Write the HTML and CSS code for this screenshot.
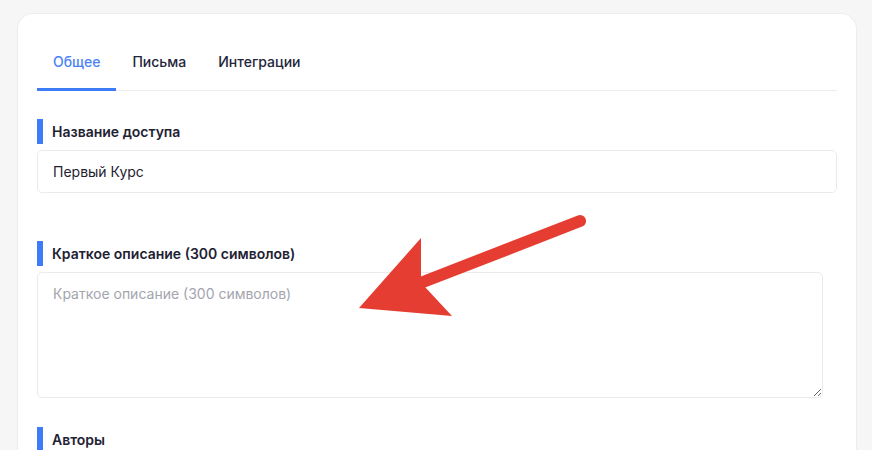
FILE: index.html
```html
<!DOCTYPE html>
<html>
<head>
	<title>Настройки доступа</title>
<link rel="stylesheet" href="styles.css">
</head>
<body>
	<div class="page">
		<div class="card">
			<div class="tabs">
				<div class="tab active">Общее</div>
				<div class="tab">Письма</div>
				<div class="tab">Интеграции</div>
			</div>

			<div class="field first">
				<div class="label">Название доступа</div>
				<input class="input" type="text" value="Первый Курс">
			</div>

			<div class="field">
				<div class="label">Краткое описание (300 символов)</div>
				<textarea class="textarea" placeholder="Краткое описание (300 символов)"></textarea>
			</div>

			<div class="field">
				<div class="label">Авторы</div>
			</div>
		</div>
	</div>

	<svg class="arrow" width="872" height="450" viewBox="0 0 872 450">
		<line x1="423" y1="282" x2="580" y2="221" stroke="#e53d31" stroke-width="12" stroke-linecap="round"/>
		<polygon points="421,238 359,308 452,316 425,287 421,277" fill="#e53d31"/>
	</svg>
</body>
</html>
```

FILE: styles.css
```css
body{
	margin: 0;
	background-color: #f6f6f7;
	font-family: Inter, "Noto Sans", sans-serif;
	color: #1e2233;
	overflow: hidden;
}
.page{
	padding: 13px 15px 0 17px;
	height: 437px;
}
.card{
	width: 800px;
	height: 417px;
	overflow: hidden;
	background-color: #fff;
	border: 1px solid #ededf0;
	border-bottom: none;
	border-radius: 16px 16px 0 0;
	padding: 19px 19px 0 19px;
}
.tabs{
	display: flex;
	border-bottom: 1px solid #ececf0;
}
.tab{
	font-size: 14px;
	line-height: 20px;
	font-weight: 500;
	padding: 19px 16px 16px 16px;
	border-bottom: 3px solid transparent;
	margin-bottom: -1px;
	color: #23263a;
}
.tab.active{
	color: #4d82f6;
	border-bottom-color: #3d7cf6;
}
.field{
	margin-top: 48px;
}
.field.first{
	margin-top: 28px;
}
.field + .field + .field{
	margin-top: 29px;
}
.label{
	border-left: 6px solid #3d7cf6;
	padding-left: 9px;
	height: 25px;
	line-height: 25px;
	font-size: 14px;
	font-weight: 600;
	margin-bottom: 6px;
}
.input{
	box-sizing: border-box;
	display: block;
	width: 100%;
	height: 43px;
	border: 1px solid #ebebef;
	border-radius: 5px;
	padding: 0 15px;
	font-family: Inter, "Noto Sans", sans-serif;
	font-size: 14px;
	color: #1f2230;
	outline: none;
}
.textarea{
	box-sizing: border-box;
	display: block;
	width: 786px;
	height: 126px;
	border: 1px solid #ebebef;
	border-radius: 5px;
	padding: 11px 15px;
	font-family: Inter, "Noto Sans", sans-serif;
	font-size: 14px;
	line-height: 20px;
	outline: none;
}
.textarea::placeholder{
	color: #a3a5ad;
}
.arrow{
	position: absolute;
	top: 0;
	left: 0;
	pointer-events: none;
}
```
